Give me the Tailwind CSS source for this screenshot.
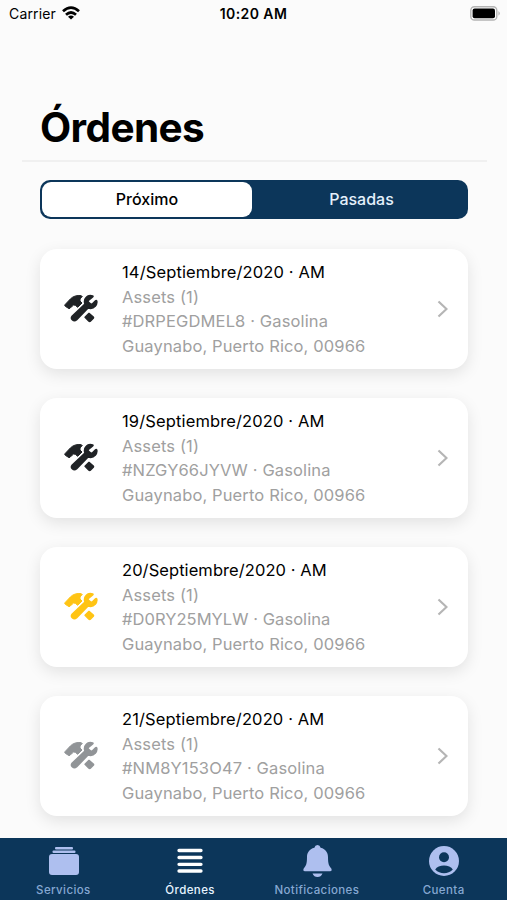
<!DOCTYPE html>
<html lang="es">
<head>
<meta charset="utf-8">
<title>Órdenes</title>
<script src="https://cdn.jsdelivr.net/npm/@tailwindcss/browser@4"></script>
</head>
<body class="w-[507px] h-[900px] overflow-hidden bg-[#fbfbfb] font-['Inter',sans-serif] text-black">
<svg class="hidden">
  <symbol id="tools" viewBox="27 39 102 87">
    <path stroke-width="3" stroke-linejoin="round" d="M30 71 L46 54 Q59 41 79 44 Q84 47 80 49 Q73 53 75 60 L81 66 L68 79 L61 73 Q55 70 52 75 L45 82 Q42 84 39 81 L31 76 Q28 74 30 71Z"/>
    <path stroke-width="5" stroke-linejoin="round" d="M113 45 Q101 41 94 49 Q86 57 90 69 L52 105 Q47 111 52 116 Q58 122 65 116 L99 81 Q113 85 120 76 Q127 68 125 60 Q124 57 121 60 L112 69 Q108 71 105 68 L100 63 Q98 60 101 57 L112 48 Q115 46 113 45Z"/>
    <path stroke-width="4" stroke-linejoin="round" d="M102 97 L115 108 Q117 110 115 112 L106 121 Q104 123 101 120 L90 109Z"/>
  </symbol>
</svg>
<div class="flex h-[900px] flex-col">
  <header class="grid h-7 grid-cols-3 items-center pl-[9px] pr-[6px] text-[14px]">
    <div class="-mt-px flex items-center gap-[6px]"><span class="tracking-[0.15px]">Carrier</span>
      <svg class="-mt-px h-[14px] w-[18px]" viewBox="0 0 18 14" fill="none" stroke="#000" stroke-width="2.7"><path d="M1 5.3Q9-2 17 5.3M4 8.8Q9 4.2 14 8.8"/><path d="M9 13.6 6 10.7Q9 8.2 12 10.7Z" fill="#000" stroke="none"/></svg>
    </div>
    <div class="-mt-px text-center font-semibold tracking-[0.4px] -ml-[3px]">10:20 AM</div>
    <svg class="-mt-[2px] h-[15px] w-[31px] justify-self-end" viewBox="0 0 31 15"><rect x=".8" y=".8" width="26" height="13.2" rx="3.6" fill="#fff" stroke="#b4b4b4" stroke-width="1.4"/><rect x="2.6" y="2.6" width="22.4" height="9.6" rx="2" fill="#000"/><path d="M28.5 5Q31 7.4 28.5 9.8Z" fill="#aaa"/></svg>
  </header>
  <div class="ml-[22px] mr-[20px] flex h-[134px] items-end border-b-2 border-[#f0f0f0] pl-[18px]">
    <h1 class="mb-[7px] text-[40.5px] font-bold leading-[50px] tracking-[-0.6px]">Órdenes</h1>
  </div>
  <div class="ml-10 mr-[39px] mt-[18px] grid h-[39px] grid-cols-2 rounded-[10px] bg-[#0c365a] p-[2px] text-center text-[16px] leading-[35px] font-medium">
    <div class="mr-[2px] rounded-[9px] bg-white">Próximo</div>
    <div class="pl-[3px] text-[#e4f0fb]">Pasadas</div>
  </div>
  <main class="ml-10 mr-[39px] mt-[30px] flex h-[589px] flex-col gap-[29px]">
    <article class="flex h-[120px] shrink-0 items-center rounded-[17px] bg-white pl-[24px] pr-[20px] shadow-[0_5px_16px_rgba(0,0,0,0.10)]">
      <svg class="mb-[2px] h-[29px] w-[34px] fill-[#202326] stroke-[#202326]"><use href="#tools"/></svg>
      <div class="ml-[24px] flex-1 whitespace-nowrap text-[16.5px] leading-[24.5px] tracking-[0.13px] text-[#a0a0a0]"><p class="text-black">14/Septiembre/2020 · AM</p><p>Assets (1)</p><p>#DRPEGDMEL8 · Gasolina</p><p>Guaynabo, Puerto Rico, 00966</p></div>
      <svg class="h-[18px] w-[11px]" viewBox="0 0 11 18" fill="none" stroke="#b5b5b5" stroke-width="2.2"><path d="m1.5 1.5 8 7.5-8 7.5"/></svg>
    </article>
    <article class="flex h-[120px] shrink-0 items-center rounded-[17px] bg-white pl-[24px] pr-[20px] shadow-[0_5px_16px_rgba(0,0,0,0.10)]">
      <svg class="mb-[2px] h-[29px] w-[34px] fill-[#202326] stroke-[#202326]"><use href="#tools"/></svg>
      <div class="ml-[24px] flex-1 whitespace-nowrap text-[16.5px] leading-[24.5px] tracking-[0.13px] text-[#a0a0a0]"><p class="text-black">19/Septiembre/2020 · AM</p><p>Assets (1)</p><p>#NZGY66JYVW · Gasolina</p><p>Guaynabo, Puerto Rico, 00966</p></div>
      <svg class="h-[18px] w-[11px]" viewBox="0 0 11 18" fill="none" stroke="#b5b5b5" stroke-width="2.2"><path d="m1.5 1.5 8 7.5-8 7.5"/></svg>
    </article>
    <article class="flex h-[120px] shrink-0 items-center rounded-[17px] bg-white pl-[24px] pr-[20px] shadow-[0_5px_16px_rgba(0,0,0,0.10)]">
      <svg class="mb-[2px] h-[29px] w-[34px] fill-[#ffc414] stroke-[#ffc414]"><use href="#tools"/></svg>
      <div class="ml-[24px] flex-1 whitespace-nowrap text-[16.5px] leading-[24.5px] tracking-[0.13px] text-[#a0a0a0]"><p class="tracking-[0.07px] text-black">20/Septiembre/2020 · AM</p><p>Assets (1)</p><p class="tracking-[0.05px]">#D0RY25MYLW · Gasolina</p><p>Guaynabo, Puerto Rico, 00966</p></div>
      <svg class="h-[18px] w-[11px]" viewBox="0 0 11 18" fill="none" stroke="#b5b5b5" stroke-width="2.2"><path d="m1.5 1.5 8 7.5-8 7.5"/></svg>
    </article>
    <article class="flex h-[120px] shrink-0 items-center rounded-[17px] bg-white pl-[24px] pr-[20px] shadow-[0_5px_16px_rgba(0,0,0,0.10)]">
      <svg class="mb-[2px] h-[29px] w-[34px] fill-[#919497] stroke-[#919497]"><use href="#tools"/></svg>
      <div class="ml-[24px] flex-1 whitespace-nowrap text-[16.5px] leading-[24.5px] tracking-[0.13px] text-[#a0a0a0]"><p class="text-black">21/Septiembre/2020 · AM</p><p>Assets (1)</p><p>#NM8Y153O47 · Gasolina</p><p>Guaynabo, Puerto Rico, 00966</p></div>
      <svg class="h-[18px] w-[11px]" viewBox="0 0 11 18" fill="none" stroke="#b5b5b5" stroke-width="2.2"><path d="m1.5 1.5 8 7.5-8 7.5"/></svg>
    </article>
  </main>
  <nav class="relative grid h-[62px] grid-cols-4 bg-[#0c365a] pt-[6px] text-center text-[11.5px] font-medium leading-[14px] tracking-[0.4px] text-[#86a8d2]">
    <div class="flex flex-col items-center gap-[5px]"><svg class="h-[34px] w-[34px]" viewBox="0 0 34 34" fill="#aebfef"><rect x="3" y="10" width="30" height="21" rx="3"/><rect x="6.5" y="6.5" width="23" height="2.5" rx="1"/><rect x="9" y="3" width="18" height="2.5" rx="1"/></svg>Servicios</div>
    <div class="flex flex-col items-center gap-[5px] text-[#e6f3ff]"><svg class="h-[34px] w-[34px]" viewBox="0 0 34 34" fill="none" stroke="#fff" stroke-width="3.3" stroke-linecap="round"><path d="M6 6.5h22M6 13.5h22M6 20.3h22M6 27h22"/></svg>Órdenes</div>
    <div class="flex flex-col items-center gap-[5px]"><svg class="h-[34px] w-[34px]" viewBox="0 0 34 34" fill="#aebfef"><path d="M17.5 1Q20 1 20.6 3.7C26 5 28 9 28 13C28 20 29 22 31.3 24.4Q32.5 27 30 27.3H5Q2.5 27 3.7 24.4C6 22 7 20 7 13C7 9 9 5 14.4 3.7Q15 1 17.5 1ZM12.5 29.5H22.5Q21 33 17.5 33T12.5 29.5Z"/></svg>Notificaciones</div>
    <div class="flex flex-col items-center gap-[5px]"><svg class="h-[34px] w-[34px]" viewBox="0 0 34 34"><circle cx="17" cy="17" r="15" fill="#aebfef"/><circle cx="17" cy="13.3" r="5" fill="#0c365a"/><path d="M8.2 25.5C11 20 23 20 25.8 25.5Q22 29.3 17 29.3T8.2 25.5Z" fill="#0c365a"/></svg>Cuenta</div>
  </nav>
</div>
</body>
</html>
